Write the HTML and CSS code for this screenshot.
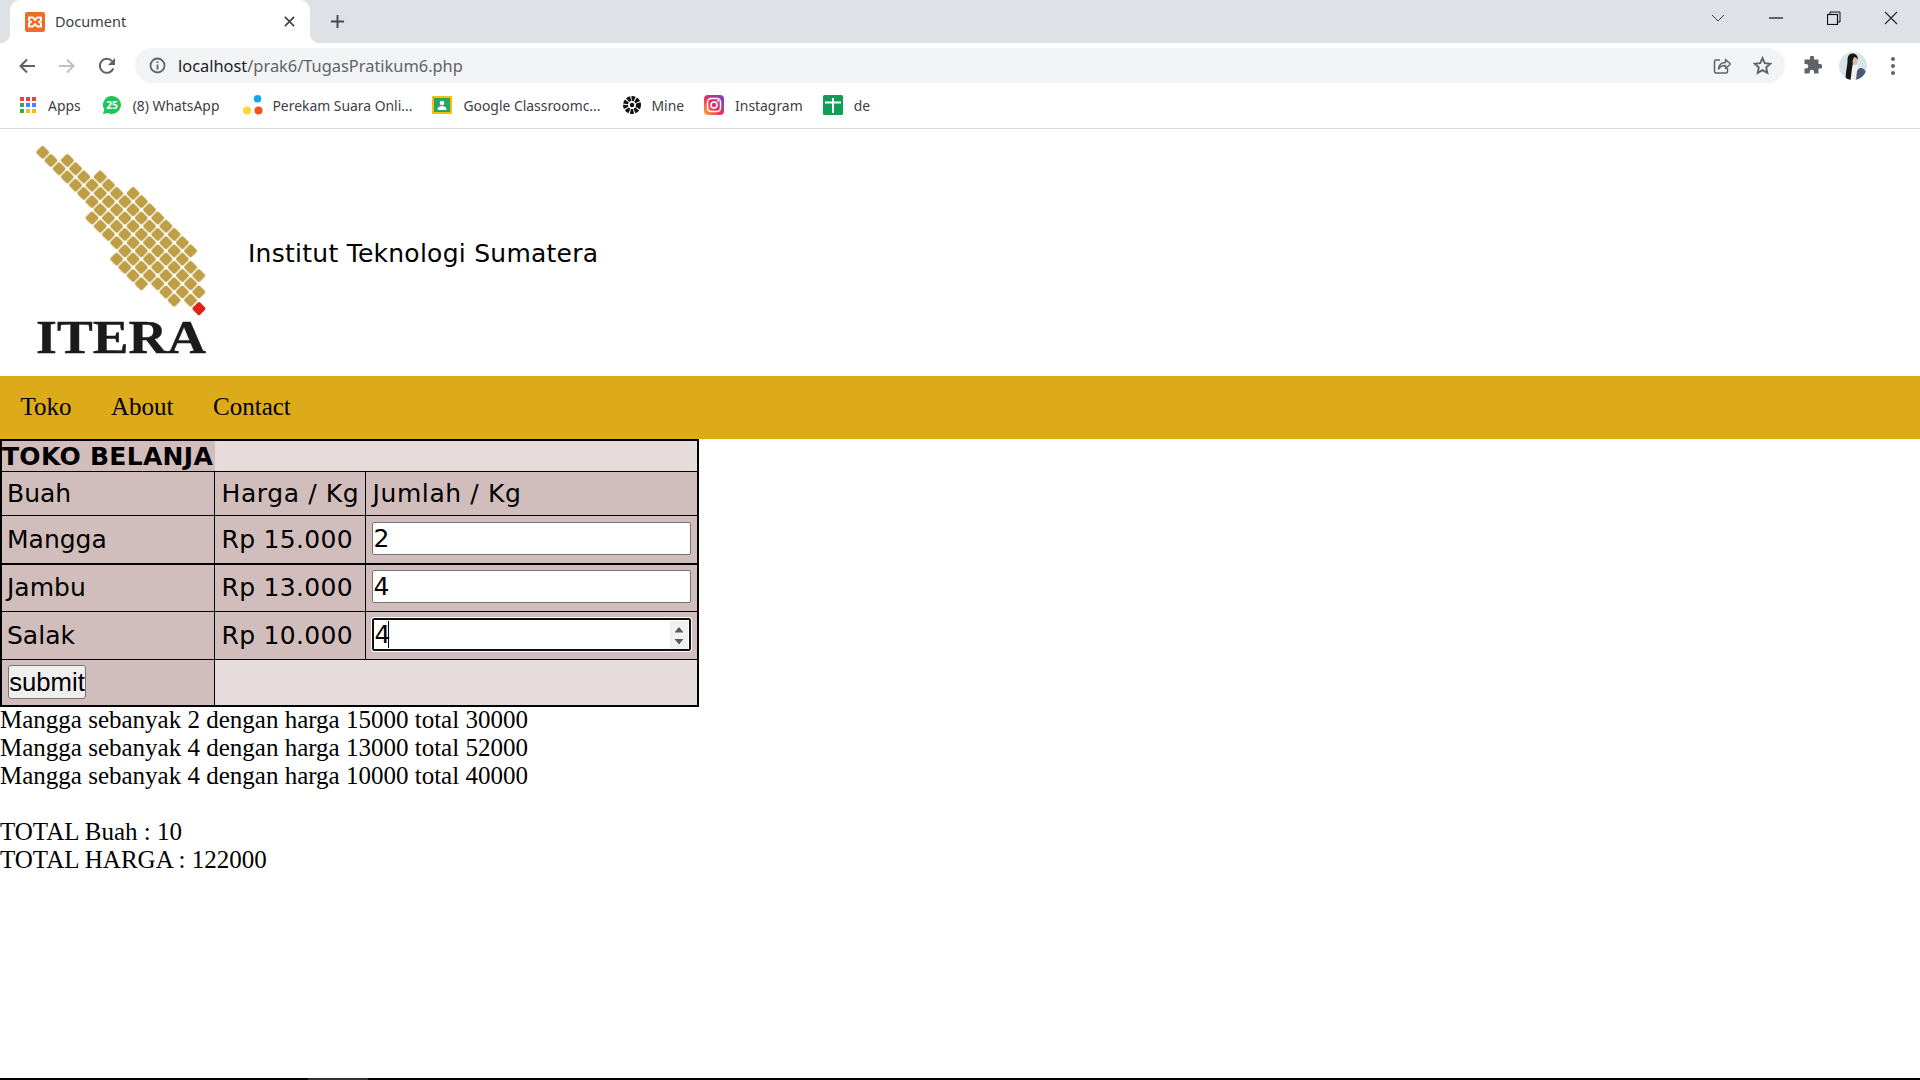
FILE: index.html
```html
<!DOCTYPE html>
<html lang="id">
<head>
<meta charset="utf-8">
<title>Document</title>
<link rel="stylesheet" href="styles.css">
</head>
<body>
<div class="browser">
  <div class="tabstrip">
    <div class="tab">
      <svg class="favicon" viewBox="0 0 20 20"><rect width="20" height="20" rx="2" fill="#ee6c25"/><path d="M4 5.500h4l2 2.500 2-2.500h4v3l-2 1.500 2 1.500v3h-4l-2-2.500-2 2.500H4v-3l2-1.500-2-1.500z" fill="none" stroke="#fff" stroke-width="2" stroke-linejoin="round"/></svg>
      <span class="tab-title">Document</span>
      <svg class="tab-close" viewBox="0 0 12 12"><path d="M1 1l10 10M11 1L1 11" stroke="#3c4043" stroke-width="1.800"/></svg>
    </div>
    <svg class="new-tab" viewBox="0 0 16 16"><path d="M8 1v14M1 8h14" stroke="#454a4f" stroke-width="2"/></svg>
    <div class="win-controls">
      <div class="win-btn"><svg width="14" height="8" viewBox="0 0 14 8"><path d="M1 1l6 6 6-6" fill="none" stroke="#3c4043" stroke-width="1"/></svg></div>
      <div class="win-btn"><svg width="14" height="2" viewBox="0 0 14 2"><path d="M0 1h14" stroke="#111" stroke-width="1.200"/></svg></div>
      <div class="win-btn"><svg width="14" height="14" viewBox="0 0 14 14"><path d="M3 3V1h10v10h-2" fill="none" stroke="#111" stroke-width="1"/><rect x=".5" y="3.500" width="10" height="10" fill="none" stroke="#111" stroke-width="1.200"/></svg></div>
      <div class="win-btn"><svg width="14" height="14" viewBox="0 0 14 14"><path d="M1 1l12 12M13 1L1 13" stroke="#222" stroke-width="1.100"/></svg></div>
    </div>
  </div>

  <div class="toolbar">
    <div class="tool-btn"><svg width="18" height="18" viewBox="0 0 18 18"><path d="M17 9H2.500M9 2.500L2.500 9 9 15.500" fill="none" stroke="#5f6368" stroke-width="2"/></svg></div>
    <div class="tool-btn"><svg width="18" height="18" viewBox="0 0 18 18"><path d="M1 9h14.500M9 2.500L15.500 9 9 15.500" fill="none" stroke="#bdc1c6" stroke-width="2"/></svg></div>
    <div class="tool-btn"><svg width="18" height="18" viewBox="0 0 18 18"><path d="M15.300 11.500A7 7 0 1 1 14 4.100" fill="none" stroke="#5f6368" stroke-width="2"/><path d="M17 1v7h-7z" fill="#5f6368"/></svg></div>
    <div class="omnibox">
      <svg class="info" width="17" height="17" viewBox="0 0 17 17"><circle cx="8.500" cy="8.500" r="7" fill="none" stroke="#5f6368" stroke-width="1.800"/><path d="M8.500 7.500v5M8.500 4.300v1.800" stroke="#5f6368" stroke-width="1.800"/></svg>
      <span class="url"><span class="url-host">localhost</span>/prak6/TugasPratikum6.php</span>
      <svg class="share" width="18" height="18" viewBox="0 0 18 18"><path d="M7 3H3a1.500 1.500 0 0 0-1.500 1.500v10A1.500 1.500 0 0 0 3 16h10a1.500 1.500 0 0 0 1.500-1.500V11" fill="none" stroke="#5f6368" stroke-width="1.500"/><path d="M5.500 12c.5-4 3-6.500 7-6.500V2.500L17.500 7l-5 4.500v-3c-3 0-5.500 1-7 3.500z" fill="none" stroke="#5f6368" stroke-width="1.500" stroke-linejoin="round"/></svg>
      <svg class="star" width="19" height="19" viewBox="0 0 20 20"><path d="M10 2.200l2.400 5.300 5.800.6-4.300 3.900 1.200 5.700-5.100-2.900-5.100 2.900 1.200-5.700-4.300-3.900 5.800-.6z" fill="none" stroke="#5f6368" stroke-width="2"/></svg>
    </div>
    <div class="tool-btn ext"><svg width="19" height="19" viewBox="0 0 19 19"><path d="M7 1.500a2 2 0 0 1 4 0V3.500h4.500V8h1.500a2.300 2.300 0 0 1 0 4.600h-1.500v4.900H11V16a2.200 2.200 0 0 0-4.400 0v1.500H1.500v-5H3a2.300 2.300 0 0 0 0-4.600H1.500V3.500H7z" fill="#5f6368"/></svg></div>
    <div class="tool-btn avatar-btn">
      <svg width="28" height="28" viewBox="0 0 28 28"><defs><clipPath id="av"><circle cx="14" cy="14" r="14"/></clipPath></defs><g clip-path="url(#av)"><rect width="28" height="28" fill="#d7e5e8"/><path d="M16 28c0-6 2-12 6-12 4 0 6 5 6 12z" fill="#4a5a75"/><path d="M13 13h6l-1 6-1 9h-6z" fill="#f3efee"/><path d="M13.500 1.500c-3.500 0-5 3-5 7 0 6-2.500 13-1.500 19.500h4.500c1-5 1-11 2.500-17l1-6c1 0 3 1 4 3 0-4-2-6.500-5.500-6.500z" fill="#17161b"/><ellipse cx="16" cy="9.500" rx="2.400" ry="3.500" fill="#e3b9a5"/></g></svg>
    </div>
    <div class="tool-btn"><svg width="6" height="20" viewBox="0 0 6 20"><circle cx="3" cy="3" r="2" fill="#5f6368"/><circle cx="3" cy="10" r="2" fill="#5f6368"/><circle cx="3" cy="17" r="2" fill="#5f6368"/></svg></div>
  </div>

  <div class="bookmarks">
    <div class="bm bm-apps">
      <svg class="bm-icon-small" viewBox="0 0 16 16"><rect x="0" y="0" width="4" height="4" fill="#ea4335"/><rect x="6" y="0" width="4" height="4" fill="#ea4335"/><rect x="12" y="0" width="4" height="4" fill="#ea4335"/><rect x="0" y="6" width="4" height="4" fill="#34a853"/><rect x="6" y="6" width="4" height="4" fill="#4285f4"/><rect x="12" y="6" width="4" height="4" fill="#4285f4"/><rect x="0" y="12" width="4" height="4" fill="#34a853"/><rect x="6" y="12" width="4" height="4" fill="#fbbc04"/><rect x="12" y="12" width="4" height="4" fill="#fbbc04"/></svg>
      <span>Apps</span>
    </div>
    <div class="bm">
      <svg class="bm-icon" viewBox="0 0 20 20"><path d="M10 1a9 9 0 0 1 0 18c-1.500 0-3-.4-4.300-1L1 19l1.200-4.500A9 9 0 0 1 10 1z" fill="#1fc45a"/><text class="wa-count" x="10" y="13.500" text-anchor="middle">25</text></svg>
      <span>(8) WhatsApp</span>
    </div>
    <div class="bm bm-perekam">
      <svg class="bm-icon" viewBox="0 0 20 20"><circle cx="14.500" cy="3.800" r="3.800" fill="#12a5f4"/><circle cx="4" cy="15.500" r="4" fill="#fdd835"/><circle cx="15.500" cy="15.500" r="4" fill="#f4511e"/></svg>
      <span>Perekam Suara Onli...</span>
    </div>
    <div class="bm">
      <svg class="bm-icon" viewBox="0 0 20 20"><rect width="20" height="18" y="1" rx="1" fill="#fbbc04"/><rect x="2" y="3" width="16" height="14" fill="#25a667"/><circle cx="10" cy="8" r="2.300" fill="#fff"/><path d="M5.500 15c0-3 2-4 4.500-4s4.500 1 4.500 4z" fill="#fff"/></svg>
      <span>Google Classroomc...</span>
    </div>
    <div class="bm bm-mine">
      <svg class="bm-icon" viewBox="0 0 20 20"><circle cx="10" cy="10" r="6.500" fill="none" stroke="#111" stroke-width="5" stroke-dasharray="3.200 1"/><circle cx="10" cy="10" r="2.200" fill="#111"/></svg>
      <span>Mine</span>
    </div>
    <div class="bm">
      <svg class="bm-icon" viewBox="0 0 20 20"><defs><linearGradient id="ig" x1="0" y1="1" x2="1" y2="0"><stop offset="0" stop-color="#fdb22f"/><stop offset=".45" stop-color="#e8325f"/><stop offset="1" stop-color="#6a45d0"/></linearGradient></defs><rect width="20" height="20" rx="4" fill="url(#ig)"/><rect x="3.500" y="3.500" width="13" height="13" rx="3.500" fill="none" stroke="#fff" stroke-width="1.500"/><circle cx="10" cy="10" r="3" fill="none" stroke="#fff" stroke-width="1.500"/><circle cx="14" cy="6" r=".9" fill="#fff"/></svg>
      <span>Instagram</span>
    </div>
    <div class="bm">
      <svg class="bm-icon" viewBox="0 0 20 20"><rect width="20" height="20" rx="1.500" fill="#0f9d58"/><path d="M2 7.500h16M10 3v15" stroke="#fff" stroke-width="2"/></svg>
      <span>de</span>
    </div>
  </div>
</div>

<header class="site-header">
  <svg class="logo" viewBox="20 129 220 247" width="220" height="247">
    <defs>
      <pattern id="dots" patternUnits="userSpaceOnUse" x="-5.810" y="-5.810" width="11.620" height="11.620">
        <rect x="0.660" y="0.660" width="10.300" height="10.300" rx="2" fill="#bf9f45"/>
      </pattern>
    </defs>
    <g transform="translate(42.700 152.300) rotate(45)" fill="url(#dots)">
      <rect x="87.150" y="-40.670" width="92.960" height="11.620"/>
      <rect x="52.290" y="-29.050" width="151.060" height="11.620"/>
      <rect x="17.430" y="-17.430" width="197.540" height="11.620"/>
      <rect x="-5.810" y="-5.810" width="220.780" height="11.620"/>
      <rect x="75.530" y="5.810" width="127.820" height="11.620"/>
      <rect x="122.010" y="17.430" width="46.480" height="11.620"/>
      <rect x="215.820" y="-5.150" width="10.300" height="10.300" rx="2" fill="#de2219"/>
    </g>
    <text class="logo-text" x="36" y="353" textLength="170" lengthAdjust="spacingAndGlyphs">ITERA</text>
  </svg>
  <h1 class="site-name">Institut Teknologi Sumatera</h1>
</header>

<nav class="site-nav">
  <a class="nav-link">Toko</a>
  <a class="nav-link">About</a>
  <a class="nav-link">Contact</a>
</nav>

<form class="shop">
  <table class="shop-table">
    <colgroup><col class="c1"><col class="c2"><col class="c3"></colgroup>
    <tr class="r-title"><td class="title-cell" colspan="3"><span class="title">TOKO BELANJA</span></td></tr>
    <tr class="r-head"><td class="name">Buah</td><td>Harga / Kg</td><td>Jumlah / Kg</td></tr>
    <tr class="r-item"><td class="name">Mangga</td><td>Rp 15.000</td><td class="qty-cell"><input class="qty" type="number" value="2"></td></tr>
    <tr class="r-item r-thick"><td class="name">Jambu</td><td>Rp 13.000</td><td class="qty-cell"><input class="qty" type="number" value="4"></td></tr>
    <tr class="r-item"><td class="name">Salak</td><td>Rp 10.000</td><td class="qty-cell"><div class="qty-wrap"><input class="qty qty-focus" type="number" value="4"><span class="caret"></span><span class="spin"><svg width="18" height="28" viewBox="0 0 18 28"><path d="M4.500 11.500L9 6l4.500 5.500zM4.500 18L9 23.500 13.500 18z" fill="#5a5a5a"/></svg></span></div></td></tr>
    <tr class="r-last"><td class="name"><button class="submit" type="button">submit</button></td><td class="empty" colspan="2"></td></tr>
  </table>
</form>

<div class="result">
  Mangga sebanyak 2 dengan harga 15000 total 30000<br>
  Mangga sebanyak 4 dengan harga 13000 total 52000<br>
  Mangga sebanyak 4 dengan harga 10000 total 40000<br>
  <br>
  TOTAL Buah : 10<br>
  TOTAL HARGA : 122000
</div>

<div class="screen-edge"><div class="edge-mark"></div></div>
</body>
</html>
```
FILE: styles.css
```css
* { box-sizing: border-box; }
html, body { height: 100%; }
body {
  margin: 0;
  display: flex;
  flex-direction: column;
  overflow: hidden;
  background: #fff;
  color: #000;
  font-family: "Liberation Serif", serif;
  font-size: 25px;
}

/* browser chrome */
.browser { flex: none; font-family: "Noto Sans", "Open Sans", sans-serif; }
.tabstrip {
  height: 43px;
  background: #dee1e6;
  display: flex;
  align-items: flex-start;
  padding-left: 10px;
}
.tab {
  position: relative;
  width: 300px;
  height: 43px;
  background: #fff;
  border-radius: 10px 10px 0 0;
  display: flex;
  align-items: center;
  padding-left: 15px;
}
.tab::before, .tab::after {
  content: "";
  position: absolute;
  bottom: 0;
  width: 10px;
  height: 10px;
}
.tab::before { left: -10px; background: radial-gradient(circle at 0 0, transparent 10px, #fff 10.500px); }
.tab::after { right: -10px; background: radial-gradient(circle at 100% 0, transparent 10px, #fff 10.500px); }
.favicon { width: 20px; height: 20px; }
.tab-title { margin: -2px 0 0 10px; font-size: 14.500px; color: #3c4043; flex: 1; }
.tab-close { width: 11px; height: 11px; margin-right: 15px; }
.new-tab { width: 15px; height: 15px; margin: 14px 0 0 20px; }
.win-controls { margin-left: auto; display: flex; }
.win-btn { width: 57.600px; height: 36px; display: flex; align-items: center; justify-content: center; }

.toolbar {
  height: 41px;
  display: flex;
  align-items: center;
  padding: 4px 7px 0;
  background: #fff;
}
.tool-btn { flex: none; width: 40px; height: 40px; display: flex; align-items: center; justify-content: center; }
.omnibox {
  flex: 1;
  height: 35px;
  margin: 0 0 0 8px;
  border-radius: 18px;
  background: #f1f3f4;
  display: flex;
  align-items: center;
  padding: 0 9px 0 14px;
}
.info { flex: none; }
.url { flex: 1; margin-left: 12px; font-size: 16.400px; color: #5f6368; }
.url-host { color: #202124; }
.share { margin-right: 22px; }
.star { margin-right: 4px; }
.ext { margin-left: 7px; }
.avatar-btn { width: 41px; }

.bookmarks {
  height: 45px;
  display: flex;
  align-items: center;
  padding: 0 0 2px 20px;
  gap: 20px;
  border-bottom: 1px solid #d9dbde;
  background: #fff;
  font-size: 13.900px;
  color: #3c4043;
}
.bm { display: flex; align-items: center; gap: 11px; }
.bm-apps { gap: 12px; margin-right: 1px; }
.bm-perekam { gap: 9px; margin-left: 4px; }
.bm-mine { gap: 9px; margin-left: 2px; }
.bm-icon { width: 20px; height: 20px; flex: none; }
.bm-icon-small { width: 16px; height: 16px; flex: none; }
.wa-count { font: bold 10px "Noto Sans", sans-serif; fill: #fff; }

/* page header */
.site-header {
  flex: none;
  height: 247px;
  display: flex;
  align-items: center;
  padding-left: 20px;
  gap: 8px;
}
.logo { flex: none; }
.logo-text { font: bold 47px "Liberation Serif", serif; fill: #1d1a1b; stroke: #1d1a1b; stroke-width: 0.400px; }
.site-name {
  margin: 1px 0 0;
  font-family: "DejaVu Sans", sans-serif;
  font-size: 25px;
  font-weight: 400;
  letter-spacing: 0.250px;
}

.site-nav {
  flex: none;
  height: 63px;
  background: #ddaa1a;
  display: flex;
  align-items: center;
  padding: 0 0 2px 20.500px;
  gap: 39.500px;
}
.nav-link { color: #000; }

/* shop table */
.shop { flex: none; margin: 0; }
.shop-table {
  width: 697px;
  table-layout: fixed;
  border-collapse: collapse;
  border: 2px solid #000;
  font-family: "DejaVu Sans", sans-serif;
  font-size: 25px;
  letter-spacing: 0.300px;
  background: #d1bdbc;
}
.c1 { width: 213px; }
.c2 { width: 151px; }
.c3 { width: 333px; }
.shop-table td { border: 1px solid #000; padding: 0 0 0 7px; white-space: nowrap; }
.shop-table .name { padding-left: 5px; letter-spacing: 0; }
.r-title { height: 31px; }
.r-head { height: 44px; letter-spacing: 0.600px; }
.r-item { height: 48px; }
.r-last { height: 46px; }
.shop-table .r-thick td { border-top-width: 2px; }
.shop-table .title-cell { padding: 0; background: #e6dcdc; }
.title {
  display: block;
  width: 213px;
  height: 30px;
  line-height: 31px;
  background: #d1bdbc;
  font-weight: 700;
  letter-spacing: 0.300px;
}
.shop-table .empty { background: #e6dcdc; }
.shop-table .qty-cell { padding: 0 6px 2px 6px; }
.qty {
  display: block;
  width: 319px;
  height: 33px;
  padding: 0 1px 0 1px;
  border: 1px solid #767676;
  border-radius: 2px;
  background: #fff;
  font-family: "DejaVu Sans", sans-serif;
  font-size: 25px;
  color: #000;
  appearance: textfield;
}
.qty-wrap { position: relative; width: 319px; }
.qty-focus {
  border: 2px solid #101010;
  outline: 1px solid #fff;
}
.caret { position: absolute; left: 16px; top: 3px; width: 1px; height: 27px; background: #000; }
.spin { position: absolute; right: 3px; top: 3px; width: 18px; height: 28px; background: #f0f0f0; display: flex; }
.submit {
  display: block;
  width: 78px;
  height: 34px;
  margin-left: 1px;
  padding: 0;
  border: 1px solid #767676;
  border-radius: 3px;
  background: #efefef;
  color: #000;
  font-family: "Liberation Sans", sans-serif;
  font-size: 25.700px;
}

.result { flex: none; line-height: 28px; margin-top: -1px; }

.screen-edge { margin-top: auto; height: 2px; background: #000; flex: none; padding-left: 308px; }
.edge-mark { width: 60px; height: 2px; background: #333; }
```
